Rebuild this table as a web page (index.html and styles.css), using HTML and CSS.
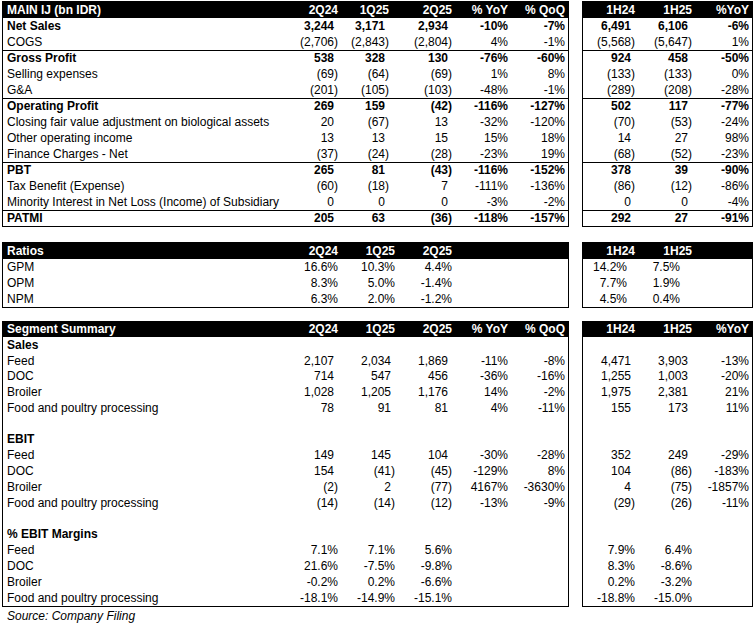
FILE: index.html
```html
<!DOCTYPE html>
<html>
<head>
<meta charset="utf-8">
<link rel="stylesheet" href="styles.css">
</head>
<body>
<div class="page">

  <div class="block b-pl">
    <div class="tbl left pl">
      <div class="row head"><div class="lbl">MAIN IJ (bn IDR)</div><div>2Q24</div><div>1Q25</div><div>2Q25</div><div>% YoY</div><div>% QoQ</div></div>
      <div class="row bold"><div class="lbl">Net Sales</div><div class="p">3,244</div><div class="p">3,171</div><div class="p">2,934</div><div>-10%</div><div>-7%</div></div>
      <div class="row"><div class="lbl">COGS</div><div>(2,706)</div><div>(2,843)</div><div>(2,804)</div><div>4%</div><div>-1%</div></div>
      <div class="row bold sep"><div class="lbl">Gross Profit</div><div class="p">538</div><div class="p">328</div><div class="p">130</div><div>-76%</div><div>-60%</div></div>
      <div class="row"><div class="lbl">Selling expenses</div><div>(69)</div><div>(64)</div><div>(69)</div><div>1%</div><div>8%</div></div>
      <div class="row"><div class="lbl">G&amp;A</div><div>(201)</div><div>(105)</div><div>(103)</div><div>-48%</div><div>-1%</div></div>
      <div class="row bold sep"><div class="lbl">Operating Profit</div><div class="p">269</div><div class="p">159</div><div>(42)</div><div>-116%</div><div>-127%</div></div>
      <div class="row"><div class="lbl">Closing fair value adjustment on biological assets</div><div class="p">20</div><div>(67)</div><div class="p">13</div><div>-32%</div><div>-120%</div></div>
      <div class="row"><div class="lbl">Other operating income</div><div class="p">13</div><div class="p">13</div><div class="p">15</div><div>15%</div><div>18%</div></div>
      <div class="row"><div class="lbl">Finance Charges - Net</div><div>(37)</div><div>(24)</div><div>(28)</div><div>-23%</div><div>19%</div></div>
      <div class="row bold sep"><div class="lbl">PBT</div><div class="p">265</div><div class="p">81</div><div>(43)</div><div>-116%</div><div>-152%</div></div>
      <div class="row"><div class="lbl">Tax Benefit (Expense)</div><div>(60)</div><div>(18)</div><div class="p">7</div><div>-111%</div><div>-136%</div></div>
      <div class="row"><div class="lbl">Minority Interest in Net Loss (Income) of Subsidiary</div><div class="p">0</div><div class="p">0</div><div class="p">0</div><div>-3%</div><div>-2%</div></div>
      <div class="row bold sep"><div class="lbl">PATMI</div><div class="p">205</div><div class="p">63</div><div>(36)</div><div>-118%</div><div>-157%</div></div>
    </div>
    <div class="tbl right">
      <div class="row head"><div>1H24</div><div>1H25</div><div>%YoY</div></div>
      <div class="row bold"><div class="p">6,491</div><div class="p">6,106</div><div>-6%</div></div>
      <div class="row"><div>(5,568)</div><div>(5,647)</div><div>1%</div></div>
      <div class="row bold sep"><div class="p">924</div><div class="p">458</div><div>-50%</div></div>
      <div class="row"><div>(133)</div><div>(133)</div><div>0%</div></div>
      <div class="row"><div>(289)</div><div>(208)</div><div>-28%</div></div>
      <div class="row bold sep"><div class="p">502</div><div class="p">117</div><div>-77%</div></div>
      <div class="row"><div>(70)</div><div>(53)</div><div>-24%</div></div>
      <div class="row"><div class="p">14</div><div class="p">27</div><div>98%</div></div>
      <div class="row"><div>(68)</div><div>(52)</div><div>-23%</div></div>
      <div class="row bold sep"><div class="p">378</div><div class="p">39</div><div>-90%</div></div>
      <div class="row"><div>(86)</div><div>(12)</div><div>-86%</div></div>
      <div class="row"><div class="p">0</div><div class="p">0</div><div>-4%</div></div>
      <div class="row bold sep"><div class="p">292</div><div class="p">27</div><div>-91%</div></div>
    </div>
  </div>

  <div class="block b-ratio">
    <div class="tbl left seg">
      <div class="row head"><div class="lbl">Ratios</div><div>2Q24</div><div>1Q25</div><div>2Q25</div><div></div><div></div></div>
      <div class="row"><div class="lbl">GPM</div><div>16.6%</div><div>10.3%</div><div>4.4%</div><div></div><div></div></div>
      <div class="row"><div class="lbl">OPM</div><div>8.3%</div><div>5.0%</div><div>-1.4%</div><div></div><div></div></div>
      <div class="row"><div class="lbl">NPM</div><div>6.3%</div><div>2.0%</div><div>-1.2%</div><div></div><div></div></div>
    </div>
    <div class="tbl right ratio-r">
      <div class="row head"><div>1H24</div><div>1H25</div><div></div></div>
      <div class="row"><div class="r1">14.2%</div><div class="r2">7.5%</div><div></div></div>
      <div class="row"><div class="r1">7.7%</div><div class="r2">1.9%</div><div></div></div>
      <div class="row"><div class="r1">4.5%</div><div class="r2">0.4%</div><div></div></div>
    </div>
  </div>

  <div class="block b-seg">
    <div class="tbl left seg">
      <div class="row head hs"><div class="lbl">Segment Summary</div><div>2Q24</div><div>1Q25</div><div>2Q25</div><div>% YoY</div><div>% QoQ</div></div>
      <div class="row"><div class="lbl b">Sales</div><div></div><div></div><div></div><div></div><div></div></div>
      <div class="row"><div class="lbl">Feed</div><div class="p">2,107</div><div class="p">2,034</div><div class="p">1,869</div><div>-11%</div><div>-8%</div></div>
      <div class="row short"><div class="lbl">DOC</div><div class="p">714</div><div class="p">547</div><div class="p">456</div><div>-36%</div><div>-16%</div></div>
      <div class="row"><div class="lbl">Broiler</div><div class="p">1,028</div><div class="p">1,205</div><div class="p">1,176</div><div>14%</div><div>-2%</div></div>
      <div class="row"><div class="lbl">Food and poultry processing</div><div class="p">78</div><div class="p">91</div><div class="p">81</div><div>4%</div><div>-11%</div></div>
      <div class="row short"><div class="lbl"></div><div></div><div></div><div></div><div></div><div></div></div>
      <div class="row"><div class="lbl b">EBIT</div><div></div><div></div><div></div><div></div><div></div></div>
      <div class="row"><div class="lbl">Feed</div><div class="p">149</div><div class="p">145</div><div class="p">104</div><div>-30%</div><div>-28%</div></div>
      <div class="row"><div class="lbl">DOC</div><div class="p">154</div><div>(41)</div><div>(45)</div><div>-129%</div><div>8%</div></div>
      <div class="row"><div class="lbl">Broiler</div><div>(2)</div><div class="p">2</div><div>(77)</div><div>4167%</div><div>-3630%</div></div>
      <div class="row"><div class="lbl">Food and poultry processing</div><div>(14)</div><div>(14)</div><div>(12)</div><div>-13%</div><div>-9%</div></div>
      <div class="row short"><div class="lbl"></div><div></div><div></div><div></div><div></div><div></div></div>
      <div class="row"><div class="lbl b">% EBIT Margins</div><div></div><div></div><div></div><div></div><div></div></div>
      <div class="row"><div class="lbl">Feed</div><div>7.1%</div><div>7.1%</div><div>5.6%</div><div></div><div></div></div>
      <div class="row"><div class="lbl">DOC</div><div>21.6%</div><div>-7.5%</div><div>-9.8%</div><div></div><div></div></div>
      <div class="row"><div class="lbl">Broiler</div><div>-0.2%</div><div>0.2%</div><div>-6.6%</div><div></div><div></div></div>
      <div class="row"><div class="lbl">Food and poultry processing</div><div>-18.1%</div><div>-14.9%</div><div>-15.1%</div><div></div><div></div></div>
    </div>
    <div class="tbl right">
      <div class="row head hs"><div>1H24</div><div>1H25</div><div>%YoY</div></div>
      <div class="row"><div></div><div></div><div></div></div>
      <div class="row"><div class="p">4,471</div><div class="p">3,903</div><div>-13%</div></div>
      <div class="row short"><div class="p">1,255</div><div class="p">1,003</div><div>-20%</div></div>
      <div class="row"><div class="p">1,975</div><div class="p">2,381</div><div>21%</div></div>
      <div class="row"><div class="p">155</div><div class="p">173</div><div>11%</div></div>
      <div class="row short"><div></div><div></div><div></div></div>
      <div class="row"><div></div><div></div><div></div></div>
      <div class="row"><div class="p">352</div><div class="p">249</div><div>-29%</div></div>
      <div class="row"><div class="p">104</div><div>(86)</div><div>-183%</div></div>
      <div class="row"><div class="p">4</div><div>(75)</div><div>-1857%</div></div>
      <div class="row"><div>(29)</div><div>(26)</div><div>-11%</div></div>
      <div class="row short"><div></div><div></div><div></div></div>
      <div class="row"><div></div><div></div><div></div></div>
      <div class="row"><div>7.9%</div><div>6.4%</div><div></div></div>
      <div class="row"><div>8.3%</div><div>-8.6%</div><div></div></div>
      <div class="row"><div>0.2%</div><div>-3.2%</div><div></div></div>
      <div class="row"><div>-18.8%</div><div>-15.0%</div><div></div></div>
    </div>
  </div>

  <div class="source">Source: Company Filing</div>
</div>
</body>
</html>
```

FILE: styles.css
```css
html, body {
  margin: 0;
  padding: 0;
  background: #fff;
}

.page {
  padding: 1px 0 0 2px;
  font-family: "Liberation Sans", Arial, sans-serif;
  font-size: 12px;
  color: #000;
}

.block {
  display: flex;
  gap: 13px;
  align-items: flex-start;
}

.b-ratio { margin-top: 15px; }
.b-seg { margin-top: 13px; }

.tbl {
  border: 1px solid #000;
  box-sizing: border-box;
}

.tbl.left { width: 567px; }
.tbl.right { width: 171px; }

.row {
  display: grid;
  height: 16px;
  line-height: 16px;
  box-sizing: border-box;
  padding-right: 3px;
  white-space: nowrap;
}

.row.short { height: 15px; line-height: 15px; }

.row > div {
  text-align: right;
  overflow: visible;
}

.row > .lbl {
  text-align: left;
  padding-left: 4px;
}

.pl .row { grid-template-columns: 285px 50px 51px 63px 56px 57px; }
.seg .row { grid-template-columns: 285px 50px 57px 57px 56px 57px; }
.right .row { grid-template-columns: 52px 57px 57px; }

.head {
  background: #000;
  color: #fff;
  font-weight: bold;
}

.head.hs { height: 15px; line-height: 15px; }

.bold { font-weight: bold; }
.b { font-weight: bold; }

.sep { border-top: 1px solid #000; line-height: 15px; }

.p { padding-right: 4px; }

.ratio-r .r1 { padding-right: 8px; }
.ratio-r .r2 { padding-right: 12px; }

.source {
  margin-top: 1px;
  padding-left: 5px;
  font-style: italic;
  line-height: 16px;
}
```
